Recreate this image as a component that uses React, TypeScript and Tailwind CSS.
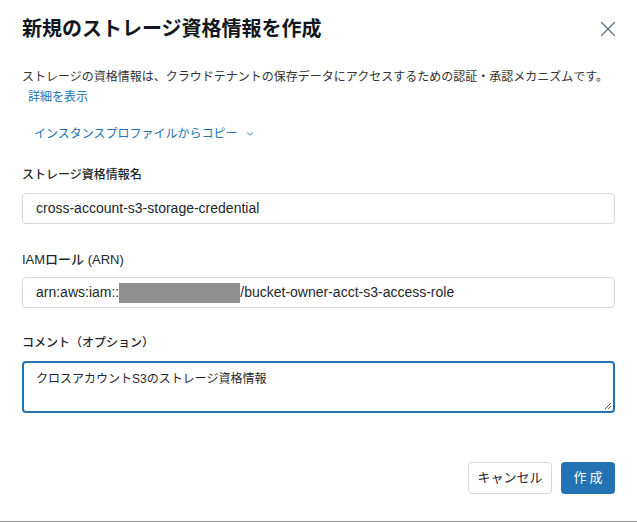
import { X, ChevronDown } from "lucide-react";

const jp = "[font-family:'Liberation_Sans','Noto_Sans_CJK_JP',sans-serif]";

function Label({ children, size = "text-[12px]" }: { children: React.ReactNode; size?: string }) {
  return <div className={`${size} leading-5 font-medium text-[#1f272d]`}>{children}</div>;
}

export default function App() {
  return (
    <div className={`${jp} w-[637px] h-[522px] bg-white border-b border-[#8a8a8a] flex flex-col px-[22px] text-[#1f272d]`}>
      {/* Header */}
      <div className="flex items-center justify-between pt-[15px] h-[42px]">
        <h1 className="text-[20px] leading-7 font-bold text-[#11171c]">新規のストレージ資格情報を作成</h1>
        <button className="mr-[-6px] text-[#5f7281]">
          <X size={26} strokeWidth={1.2} />
        </button>
      </div>

      {/* Description */}
      <p className="mt-[25px] text-[12px] leading-5 text-[#333]">
        ストレージの資格情報は、クラウドテナントの保存データにアクセスするための認証・承認メカニズムです。
        <a className="ml-[6px] text-[#2272b4]">詳細を表示</a>
      </p>

      <button className="mt-[17px] ml-[12px] flex items-center gap-[7px] text-[12px] leading-5 text-[#2272b4] self-start">
        インスタンスプロファイルからコピー
        <ChevronDown size={10} strokeWidth={2.2} />
      </button>

      {/* Fields */}
      <div className="mt-[21px]">
        <Label>ストレージ資格情報名</Label>
        <div className="mt-[8px] h-[31px] rounded border border-[#d1d9e1] px-[13px] flex items-center text-[14px] text-[#1f272d]">
          cross-account-s3-storage-credential
        </div>
      </div>

      <div className="mt-[26px]">
        <Label size="text-[13px]">IAMロール (ARN)</Label>
        <div className="mt-[7px] h-[31px] rounded border border-[#d1d9e1] px-[13px] flex items-center text-[14px] text-[#1f272d]">
          <span>arn:aws:iam::</span>
          <span className="inline-block w-[121px] h-[20px] bg-[#8f8f8f]" />
          <span>/bucket-owner-acct-s3-access-role</span>
        </div>
      </div>

      <div className="mt-[25px]">
        <Label>コメント（オプション）</Label>
        <div className="mt-[8px] h-[52px] rounded border-2 border-[#2272b4] px-[12px] pt-[6px] text-[12px] leading-5 text-[#1f272d] relative">
          クロスアカウントS3のストレージ資格情報
          <svg className="absolute right-[1px] bottom-[1px]" width="8" height="8" viewBox="0 0 8 8">
            <path d="M7 1 L1 7 M7 4 L4 7" stroke="#555" strokeWidth="1" />
          </svg>
        </div>
      </div>

      {/* Footer */}
      <div className="mt-[49px] flex justify-end gap-[9px]">
        <button className="h-[32px] w-[84px] rounded border border-[#d1d9e1] text-[13px] text-[#1f272d]">
          キャンセル
        </button>
        <button className="h-[32px] w-[54px] rounded bg-[#2272b4] text-[13px] text-white tracking-[3px] pl-[3px]">
          作成
        </button>
      </div>
    </div>
  );
}
